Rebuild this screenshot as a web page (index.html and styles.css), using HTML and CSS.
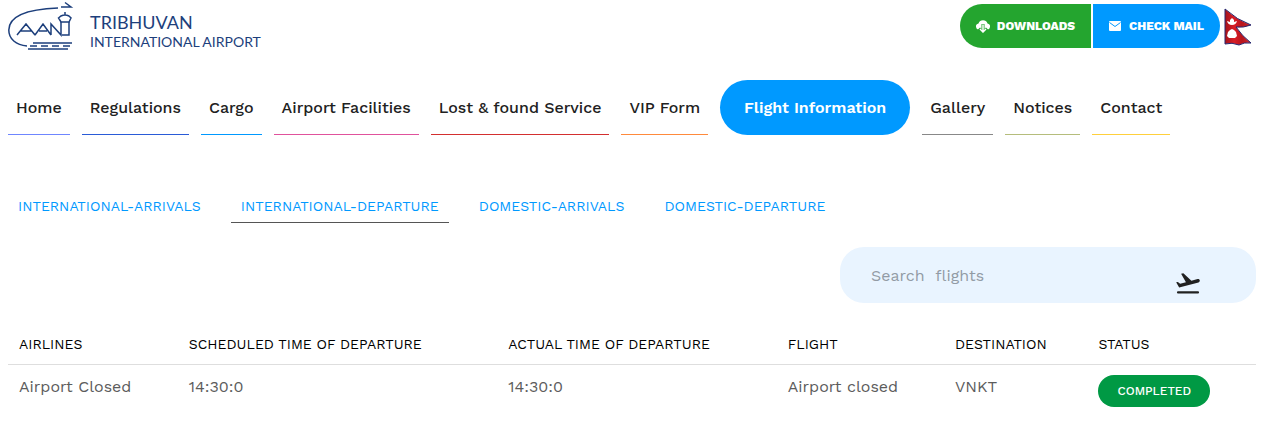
FILE: index.html
```
<!DOCTYPE html>
<html lang="en">
<head>
  <meta charset="utf-8">
  <meta name="viewport" content="width=device-width, initial-scale=1">
  <title>Tribhuvan International Airport</title>
  <link rel="stylesheet" href="styles.css">
</head>
<body>

  <header class="topbar">
    <a href="#" class="brand">
      <svg class="brand-mark" viewBox="0 0 66 52" aria-hidden="true">
        <path d="M50 8 C24 9 1 14 .8 30 C.8 39 8 45 19 46" />
        <path d="M53 7 H63 L57 2.500" />
        <path d="M9 35 L18 24 L27 35 M13 31 H23 M27 35 L35 24 L43 35 M31 31 H39 M43 35 V24 L53 35 V22 M54 35 H61 V22" />
        <path d="M50.500 18 L53 16 Q57 14 61 16 L63 18 L61 22 H53 Z M57 15 V12" />
        <path d="M25 43 H64 M22 46 H29 M33 46 H40 M44 46 H51 M55 46 H62 M20 49 H60" />
      </svg>
      <span class="brand-text">
        <span class="brand-name">TRIBHUVAN</span>
        <span class="brand-sub">INTERNATIONAL AIRPORT</span>
      </span>
    </a>
    <div class="actions">
      <button type="button" class="btn btn-downloads">
        <svg viewBox="0 0 14 14" aria-hidden="true">
          <path d="M3.500 10.500 A3 3 0 0 1 2.500 4.500 A4.800 4.800 0 0 1 11.500 4.500 A3 3 0 0 1 10.500 10.500 Z" fill="#fff" />
          <path d="M7 5 V11 M3 9.500 L7 13.500 L11 9.500" fill="none" stroke="#24a52f" stroke-width="3" />
          <path d="M7 5.500 V12 M4 10 L7 13 L10 10" fill="none" stroke="#fff" stroke-width="1.500" />
        </svg>
        DOWNLOADS
      </button>
      <button type="button" class="btn btn-mail">
        <svg viewBox="0 0 14 14" aria-hidden="true">
          <rect x="1" y="2" width="12" height="10" rx="1" fill="#fff" />
          <path d="M1.500 3.500 L7 7.500 L12.500 3.500" fill="none" stroke="#0099ff" />
        </svg>
        CHECK MAIL
      </button>
      <svg class="flag" viewBox="0 0 28 38" role="img" aria-label="Nepal">
        <defs>
          <linearGradient id="cloth">
            <stop offset="0" stop-color="#a3131b" />
            <stop offset=".35" stop-color="#d91e27" />
            <stop offset=".65" stop-color="#b8141c" />
            <stop offset="1" stop-color="#cf2a30" />
          </linearGradient>
        </defs>
        <path d="M1 1 Q13 12 27 17 Q19 20 12 19 Q18 28 27 35 Q20 34 15 37 Q8 34 1 36 Z" fill="url(#cloth)" stroke="#25276f" />
        <path d="M3 13 L6 14 L6 12 L8 10 L10 12 L10 14 L13 13 Q12 17 8 17 Q4 17 3 13 Z" fill="#fff" />
        <path d="M8 21 L10 22 L12 24 L13 28 L11 30 H5 L3 28 L4 24 L6 22 Z" fill="#fff" />
      </svg>
    </div>
  </header>

  <nav class="menu">
    <a href="#" class="menu-item home">Home</a>
    <a href="#" class="menu-item regulations">Regulations</a>
    <a href="#" class="menu-item cargo">Cargo</a>
    <a href="#" class="menu-item facilities">Airport Facilities</a>
    <a href="#" class="menu-item lost">Lost &amp; found Service</a>
    <a href="#" class="menu-item vip">VIP Form</a>
    <a href="#" class="menu-item active">Flight Information</a>
    <a href="#" class="menu-item gallery">Gallery</a>
    <a href="#" class="menu-item notices">Notices</a>
    <a href="#" class="menu-item contact">Contact</a>
  </nav>

  <main>
    <nav class="tabs">
      <a href="#" class="tab">INTERNATIONAL-ARRIVALS</a>
      <a href="#" class="tab selected">INTERNATIONAL-DEPARTURE</a>
      <a href="#" class="tab">DOMESTIC-ARRIVALS</a>
      <a href="#" class="tab">DOMESTIC-DEPARTURE</a>
    </nav>

    <form class="search">
      <input type="text" class="search-input" placeholder="Search  flights" aria-label="Search flights">
      <svg class="search-icon" viewBox="0 0 24 24" aria-hidden="true">
        <path d="M3.500 19h17a1 1 0 0 1 0 2h-17a1 1 0 0 1 0-2zM22.070 9.640c-.21-.8-1.040-1.280-1.840-1.060L14.920 10l-6.900-6.430-1.930.51 4.140 7.170-4.970 1.330-1.970-1.540-1.450.39 2.590 4.490L21 11.490c.81-.23 1.280-1.050 1.070-1.850z" />
      </svg>
    </form>

    <table class="flights">
      <thead>
        <tr>
          <th class="col-airline">AIRLINES</th>
          <th class="col-scheduled">SCHEDULED TIME OF DEPARTURE</th>
          <th class="col-actual">ACTUAL TIME OF DEPARTURE</th>
          <th class="col-flight">FLIGHT</th>
          <th class="col-destination">DESTINATION</th>
          <th class="col-status">STATUS</th>
        </tr>
      </thead>
      <tbody>
        <tr>
          <td>Airport Closed</td>
          <td>14:30:0</td>
          <td>14:30:0</td>
          <td>Airport closed</td>
          <td>VNKT</td>
          <td><span class="status">COMPLETED</span></td>
        </tr>
      </tbody>
    </table>
  </main>

</body>
</html>
```
FILE: styles.css
```
* {
  box-sizing: border-box;
}
body {
  margin: 0;
  padding: 0 26px 0 8px;
  background-color: #fff;
  color: #212121;
  font-family: "Work Sans", Inter, sans-serif;
  font-size: 16px;
  line-height: 24px;
}
a {
  text-decoration: none;
}

/* top bar */
.topbar {
  display: flex;
  justify-content: space-between;
  align-items: center;
  height: 52px;
}
.brand {
  display: flex;
  align-items: center;
  gap: 16px;
  color: #1d3f7c;
  font-family: Lato, sans-serif;
}
.brand-mark {
  width: 66px;
  height: 52px;
  fill: none;
  stroke: #1d3f7c;
  stroke-width: 1.5;
}
.brand-text {
  display: flex;
  flex-direction: column;
  padding-top: 12px;
}
.brand-name {
  font-size: 18px;
  line-height: 20px;
}
.brand-sub {
  font-size: 14px;
  line-height: 20px;
}
.actions {
  display: flex;
  align-items: center;
  gap: 2px;
}
.btn {
  display: flex;
  align-items: center;
  gap: 7px;
  height: 44px;
  padding: 0 16px;
  border: 0;
  color: #fff;
  font-family: inherit;
  font-size: 12px;
  font-weight: 800;
  cursor: pointer;
}
.btn svg {
  width: 14px;
  height: 14px;
}
.btn-downloads {
  background-color: #24a52f;
  border-radius: 22px 0 0 22px;
}
.btn-mail {
  padding: 0 16px 0 15px;
  background-color: #0099ff;
  border-radius: 0 22px 22px 0;
}
.flag {
  width: 28px;
  height: 38px;
  margin: 2px 4px 0 2px;
}

/* main menu */
.menu {
  display: flex;
  flex-wrap: wrap;
  gap: 12px;
  margin-top: 28px;
}
.menu-item {
  padding: 16px 8px 14px;
  border-bottom: 1px solid;
  color: #212121;
  font-weight: 500;
}
.home { border-color: #6f86ff; }
.regulations { border-color: #2a5bd7; }
.cargo { border-color: #0099ff; }
.facilities { border-color: #e0529c; }
.lost { border-color: #d32f2f; }
.vip { border-color: #ff8a3c; }
.gallery { border-color: #888; }
.notices { border-color: #b5bd7c; }
.contact { border-color: #ffd03c; }
.menu-item.active {
  padding: 16px 24px 15px;
  border: 0;
  border-radius: 28px;
  background-color: #0099ff;
  color: #fff;
  font-weight: 600;
}

/* arrivals and departures */
.tabs {
  display: flex;
  flex-wrap: wrap;
  gap: 20px;
  margin-top: 59px;
}
.tab {
  padding: 0 10px 4px;
  border-bottom: 1px solid transparent;
  color: #0099ff;
  font-size: 14px;
}
.tab.selected {
  border-color: #555;
}

.search {
  display: flex;
  align-items: center;
  width: 33.333%;
  height: 56px;
  margin: 24px 0 0 auto;
  padding: 0 54px 0 31px;
  border-radius: 24px;
  background-color: #e9f4ff;
}
.search-input {
  flex: 1;
  min-width: 0;
  padding: 0;
  border: 0;
  outline: 0;
  background: transparent;
  color: #212121;
  font-family: inherit;
  font-size: 16px;
}
.search-input::placeholder {
  color: #929ba5;
}
.search-icon {
  width: 28px;
  height: 28px;
  margin-top: 16px;
  fill: #212121;
}

.flights {
  width: 100%;
  margin-top: 21px;
  border-collapse: collapse;
}
.flights th {
  padding: 8px 11px;
  border-bottom: 1px solid #dedede;
  color: #000;
  font-size: 14px;
  font-weight: 400;
  text-align: left;
  white-space: nowrap;
}
.flights td {
  padding: 10px 11px;
  color: #5c5c5c;
  vertical-align: top;
}
.col-airline { width: 13.6%; }
.col-scheduled { width: 25.6%; }
.col-actual { width: 22.4%; }
.col-flight { width: 13.4%; }
.col-destination { width: 11.5%; }
.col-status { width: 13.5%; }
.status {
  display: inline-block;
  padding: 0 19px;
  border-radius: 16px;
  background-color: #009944;
  color: #fff;
  font-size: 12px;
  font-weight: 500;
  line-height: 32px;
}
```
